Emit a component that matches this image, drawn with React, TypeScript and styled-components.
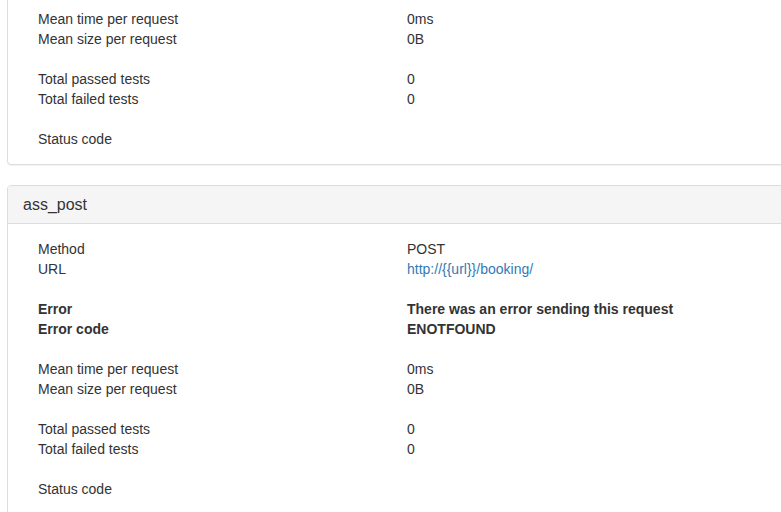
import React, { FC } from 'react';
import styled, { createGlobalStyle } from 'styled-components';

type Row = { label?: string; value?: string; kind?: 'link' | 'error' };

const GlobalStyle = createGlobalStyle`
  html, body {
    margin: 0;
    padding: 0;
    overflow: hidden;
    background: #fff;
  }
  body {
    font-family: 'Liberation Sans', Arial, Helvetica, sans-serif;
    font-size: 14px;
    line-height: 20px;
    color: #333;
  }
`;

const Page = styled.div`
  display: flex;
  flex-direction: column;
  gap: 20px;
  width: 1200px;
  margin-top: -7px;
  padding-left: 7px;
`;

const Panel = styled.section`
  background: #fff;
  border: 1px solid #ddd;
  border-radius: 4px;
  box-shadow: 0 1px 1px rgba(0, 0, 0, 0.05);
`;

const Heading = styled.header`
  padding: 10px 15px;
  background: #f5f5f5;
  border-bottom: 1px solid #ddd;
  border-radius: 3px 3px 0 0;
`;

const Title = styled.h3`
  margin: 0;
  font-size: 16px;
  font-weight: 400;
  line-height: 17px;
  color: #333;
`;

const Body = styled.div`
  padding: 15px 30px;
  display: grid;
  grid-template-columns: 369px 1fr;
  grid-auto-rows: 20px;
`;

const Label = styled.div<{ $bold?: boolean }>`
  font-weight: ${p => (p.$bold ? 700 : 400)};
`;

const Value = styled.div<{ $bold?: boolean }>`
  font-weight: ${p => (p.$bold ? 700 : 400)};
`;

const Link = styled.a`
  color: #337ab7;
  text-decoration: none;
`;

const Rows: FC<{ rows: Row[] }> = ({ rows }) => (
  <Body>
    {rows.map((r, i) => (
      <React.Fragment key={i}>
        <Label $bold={r.kind === 'error'}>{r.label}</Label>
        <Value $bold={r.kind === 'error'}>
          {r.kind === 'link' ? <Link href="#">{r.value}</Link> : r.value}
        </Value>
      </React.Fragment>
    ))}
  </Body>
);

const summary: Row[] = [
  { label: 'Mean time per request', value: '0ms' },
  { label: 'Mean size per request', value: '0B' },
  {},
  { label: 'Total passed tests', value: '0' },
  { label: 'Total failed tests', value: '0' },
  {},
  { label: 'Status code' },
];

const postRows: Row[] = [
  { label: 'Method', value: 'POST' },
  { label: 'URL', value: 'http://{{url}}/booking/', kind: 'link' },
  {},
  { label: 'Error', value: 'There was an error sending this request', kind: 'error' },
  { label: 'Error code', value: 'ENOTFOUND', kind: 'error' },
  {},
  ...summary,
];

const App: FC = () => (
  <>
    <GlobalStyle />
    <Page>
      <Panel>
        <Rows rows={summary} />
      </Panel>
      <Panel>
        <Heading>
          <Title>ass_post</Title>
        </Heading>
        <Rows rows={postRows} />
      </Panel>
    </Page>
  </>
);

export default App;
